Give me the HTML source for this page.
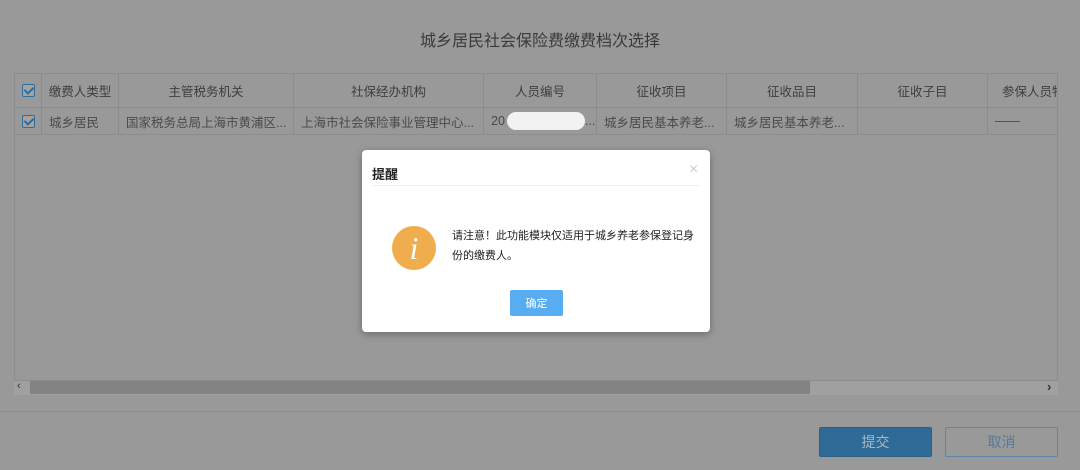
<!DOCTYPE html>
<html><head><meta charset="utf-8"><style>
*{margin:0;padding:0;box-sizing:border-box}
body{width:1080px;height:470px;overflow:hidden;background:#999;font-family:"Liberation Sans","Noto Sans CJK SC",sans-serif;color:#444;position:relative}
.abs{position:absolute}
.title{left:0;width:1080px;top:27px;text-align:center;font-size:16px;color:#3a3a3a}
.tbl{left:14px;top:73px;width:1044px;height:322px;border:1px solid #8c8c8c;background:#999;overflow:hidden}
.row{position:absolute;left:0;height:34px;white-space:nowrap;font-size:12.5px;display:flex}
.row div{border-right:1px solid #8c8c8c;height:100%;display:flex;align-items:center;justify-content:center;overflow:hidden;flex:none}
.h{top:0;border-bottom:1px solid #8c8c8c;color:#3e3e3e}
.d{top:34px;height:27px;border-bottom:1px solid #8c8c8c;color:#4a4a4a}
.d div{justify-content:flex-start !important;padding-left:7px}
.d div:first-child{justify-content:center !important;padding-left:0}
.cb{width:13px;height:13px;border:1px solid #2f6d9c;border-radius:2px;position:relative;background:#a3a3a3}
.cb:after{content:"";position:absolute;left:3px;top:0px;width:4px;height:7px;border:solid #2f6d9c;border-width:0 2px 2px 0;transform:rotate(45deg)}
.scroll{left:14px;top:380px;width:1044px;height:15px;background:#a0a0a0;border-top:1px solid #8c8c8c}
.thumb{left:30px;top:381px;width:780px;height:13px;background:#838383}
.btn{top:427px;height:30px;width:113px;font-size:14px;display:flex;align-items:center;justify-content:center;border-radius:2px}
.dlg{left:362px;top:150px;width:348px;height:182px;background:#fff;border-radius:4px;box-shadow:0 2px 8px rgba(0,0,0,.3)}
</style></head><body>
<div class="abs title">城乡居民社会保险费缴费档次选择</div>
<div class="abs tbl">
<div class="row h">
<div style="width:27px"><span class="cb"></span></div>
<div style="width:77px">缴费人类型</div>
<div style="width:175px">主管税务机关</div>
<div style="width:190px">社保经办机构</div>
<div style="width:113px">人员编号</div>
<div style="width:130px">征收项目</div>
<div style="width:131px">征收品目</div>
<div style="width:130px">征收子目</div>
<div style="width:90px;justify-content:flex-start;padding-left:14px">参保人员物</div>
</div>
<div class="row d">
<div style="width:27px"><span class="cb"></span></div>
<div style="width:77px">城乡居民</div>
<div style="width:175px">国家税务总局上海市黄浦区...</div>
<div style="width:190px">上海市社会保险事业管理中心...</div>
<div style="width:113px">20<span style="display:inline-block;width:78px;height:18px;background:#f2f2f2;border-radius:9px;margin-left:2px"></span>...</div>
<div style="width:130px">城乡居民基本养老...</div>
<div style="width:131px">城乡居民基本养老...</div>
<div style="width:130px"></div>
<div style="width:90px">——</div>
</div>
</div>
<div class="abs scroll"></div>
<div class="abs thumb"></div>
<div class="abs" style="left:17px;top:380px;font-size:11px;color:#333">‹</div>
<div class="abs" style="left:1047px;top:379px;font-size:13px;color:#333;font-weight:bold">›</div>
<div class="abs" style="left:0;top:411px;width:1080px;height:1px;background:#8c8c8c"></div>
<div class="abs btn" style="left:819px;background:#2f6a97;border:1px solid #2a5f88;color:#a9b9c8">提交</div>
<div class="abs btn" style="left:945px;border:1px solid #5f86a8;color:#56789a">取消</div>
<div class="abs dlg">
<div class="abs" style="left:10px;top:14px;font-size:13px;font-weight:bold;color:#222">提醒</div>
<div class="abs" style="left:327px;top:11px;font-size:16px;color:#ccc">×</div>
<div class="abs" style="left:10px;top:35px;width:328px;height:1px;background:#eee"></div>
<div class="abs" style="left:30px;top:76px;width:44px;height:44px;border-radius:50%;background:#f0ad4e;color:#fff;font-family:'Liberation Serif',serif;font-style:italic;font-size:32px;text-align:center;line-height:44px">i</div>
<div class="abs" style="left:90px;top:76px;width:250px;font-size:11px;line-height:20px;color:#222">请注意！此功能模块仅适用于城乡养老参保登记身<br>份的缴费人。</div>
<div class="abs" style="left:148px;top:140px;width:53px;height:26px;background:#58adf2;color:#fff;font-size:11px;display:flex;align-items:center;justify-content:center;border-radius:2px">确定</div>
</div>
</body></html>
